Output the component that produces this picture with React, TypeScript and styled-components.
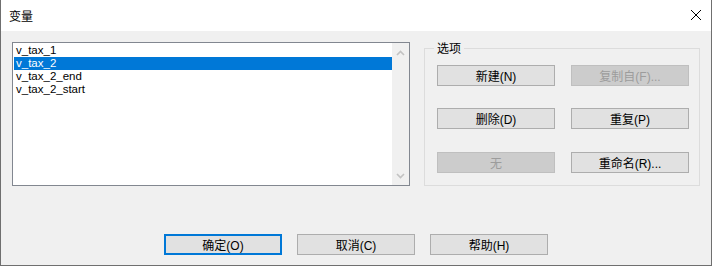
import React from "react";
import styled, { createGlobalStyle } from "styled-components";

const Global = createGlobalStyle`
  html, body { margin: 0; padding: 0; background: #ffffff; }
  body { font-family: "Liberation Sans", "Noto Sans CJK SC", sans-serif; }
  * { box-sizing: border-box; }
`;

const Window = styled.div`
  width: 712px;
  height: 266px;
  display: flex;
  flex-direction: column;
  border: 1px solid #6f6f6f;
  border-top: none;
  background: #f0f0f0;
`;

const TitleBar = styled.div`
  height: 31px;
  flex: none;
  background: #ffffff;
  display: flex;
  align-items: center;
  justify-content: space-between;
  padding: 0 9px 1px 8px;
`;

const Title = styled.span`
  font-family: "Noto Sans CJK SC", sans-serif;
  font-size: 12px;
  color: #000;
`;

const CloseIcon = styled.svg`
  width: 12px;
  height: 12px;
  display: block;
`;

const Body = styled.div`
  flex: 1;
  display: flex;
  flex-direction: column;
  padding: 11px 0 0 11px;
`;

const MainRow = styled.div`
  display: flex;
  align-items: flex-start;
`;

const ListBox = styled.div`
  width: 398px;
  height: 144px;
  border: 1px solid #828790;
  background: #ffffff;
  display: flex;
`;

const Items = styled.div`
  flex: 1;
  padding: 1px 0 0 1px;
  display: flex;
  flex-direction: column;
`;

const Item = styled.div<{ $selected?: boolean }>`
  height: 13px;
  line-height: 13px;
  padding-left: 2px;
  font-family: "Liberation Sans", sans-serif;
  font-size: 11.5px;
  color: ${(p) => (p.$selected ? "#ffffff" : "#000000")};
  background: ${(p) => (p.$selected ? "#0078d7" : "transparent")};
`;

const ScrollBar = styled.div`
  width: 17px;
  background: #f0f0f0;
  display: flex;
  flex-direction: column;
  justify-content: space-between;
  align-items: center;
  padding: 7px 0 6px;
`;

const Chevron = styled.svg`
  width: 9px;
  height: 6px;
  display: block;
`;

const Group = styled.div`
  position: relative;
  margin: 6px 0 0 14px;
  width: 276px;
  height: 138px;
  border: 1px solid #dcdcdc;
  padding: 16px 0 0 12px;
`;

const GroupLabel = styled.span`
  position: absolute;
  top: -9px;
  left: 9px;
  padding: 0 3px;
  background: #f0f0f0;
  font-family: "Noto Sans CJK SC", sans-serif;
  font-size: 12px;
  line-height: 16px;
  color: #000;
`;

const ButtonGrid = styled.div`
  display: grid;
  grid-template-columns: 118px 118px;
  grid-template-rows: 21px 22px 21px;
  column-gap: 16px;
  row-gap: 22px;
  align-items: start;
`;

const Button = styled.div<{ $disabled?: boolean; $default?: boolean }>`
  width: 118px;
  height: 21px;
  display: flex;
  align-items: center;
  justify-content: center;
  font-family: "Liberation Sans", "Noto Sans CJK SC", sans-serif;
  font-size: 12px;
  color: ${(p) => (p.$disabled ? "#9c9c9c" : "#000000")};
  background: ${(p) => (p.$disabled ? "#cccccc" : "#e1e1e1")};
  border: ${(p) =>
    p.$default ? "2px solid #0078d7" : p.$disabled ? "1px solid #bfbfbf" : "1px solid #adadad"};
`;

const Footer = styled.div`
  margin: 48px 0 0 -11px;
  display: flex;
  justify-content: center;
  gap: 15px;
`;

export default function App() {
  return (
    <>
      <Global />
      <Window>
        <TitleBar>
          <Title>变量</Title>
          <CloseIcon viewBox="0 0 12 12">
            <path d="M1 1 L11 11 M11 1 L1 11" stroke="#000" strokeWidth="1" fill="none" />
          </CloseIcon>
        </TitleBar>
        <Body>
          <MainRow>
            <ListBox>
              <Items>
                <Item>v_tax_1</Item>
                <Item $selected>v_tax_2</Item>
                <Item>v_tax_2_end</Item>
                <Item>v_tax_2_start</Item>
              </Items>
              <ScrollBar>
                <Chevron viewBox="0 0 9 6">
                  <path d="M1 5 L4.5 1.5 L8 5" stroke="#c2c2c2" strokeWidth="1.6" fill="none" />
                </Chevron>
                <Chevron viewBox="0 0 9 6">
                  <path d="M1 1 L4.5 4.5 L8 1" stroke="#c2c2c2" strokeWidth="1.6" fill="none" />
                </Chevron>
              </ScrollBar>
            </ListBox>
            <Group>
              <GroupLabel>选项</GroupLabel>
              <ButtonGrid>
                <Button>新建(N)</Button>
                <Button $disabled>复制自(F)...</Button>
                <Button>删除(D)</Button>
                <Button>重复(P)</Button>
                <Button $disabled>无</Button>
                <Button>重命名(R)...</Button>
              </ButtonGrid>
            </Group>
          </MainRow>
          <Footer>
            <Button $default>确定(O)</Button>
            <Button>取消(C)</Button>
            <Button>帮助(H)</Button>
          </Footer>
        </Body>
      </Window>
    </>
  );
}
